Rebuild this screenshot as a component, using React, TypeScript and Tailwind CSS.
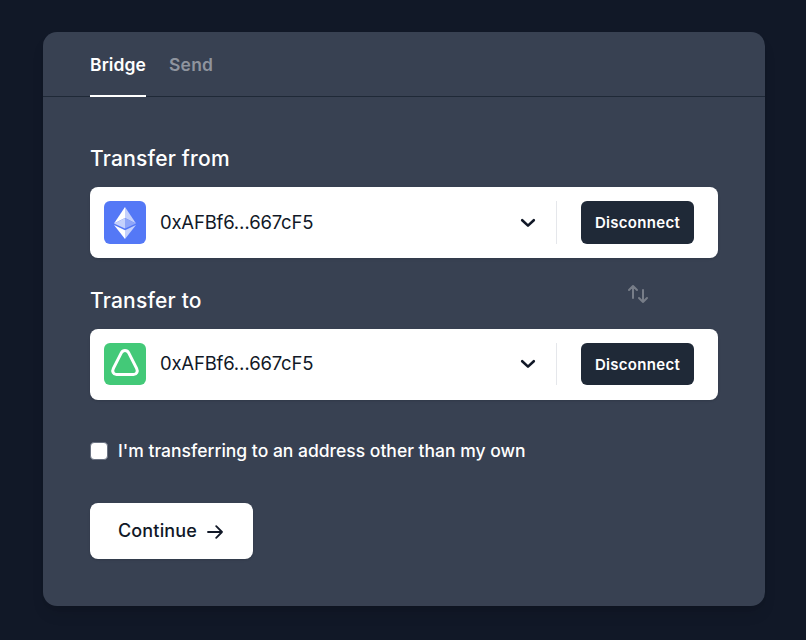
import type { ReactNode } from "react";

function EthereumLogo() {
  return (
    <div className="flex h-[43px] w-[42px] shrink-0 items-center justify-center rounded-md bg-[#5478f6]">
      <svg width="22" height="32" viewBox="0 0 22 32">
        <path d="M11 0 0 16.4 11 11Z" fill="#fff" />
        <path d="M11 0 22 16.4 11 11Z" fill="#c5d1fc" />
        <path d="M11 11 0 16.4 11 21.6Z" fill="#c5d1fc" />
        <path d="M11 11 22 16.4 11 21.6Z" fill="#8fa6f9" />
        <path d="M0 18 11 23.2V32Z" fill="#fff" />
        <path d="M22 18 11 23.2V32Z" fill="#c5d1fc" />
      </svg>
    </div>
  );
}

function TriangleLogo() {
  return (
    <div className="h-[42px] w-[42px] shrink-0 rounded-md bg-[#43c978]">
      <svg width="42" height="42" viewBox="0 0 42 42" fill="none">
        <path
          d="M17.3 9.9C18.900 6.700 23.100 6.700 24.700 9.900L32.600 25.400C34.200 28.500 32.600 31.500 29.600 31.500H12.400C9.400 31.500 7.800 28.500 9.400 25.400Z"
          stroke="#fff"
          strokeWidth="3"
          strokeLinejoin="round"
        />
      </svg>
    </div>
  );
}

function WalletRow({ logo, compact = false }: { logo: ReactNode; compact?: boolean }) {
  const controlHeight = compact ? "h-[42px]" : "h-[43px]";
  return (
    <div className="flex h-[71px] items-start rounded-lg bg-white pl-3.5 pr-6 pt-3.5 shadow-sm">
      {logo}
      <span className={`ml-3.5 flex-1 whitespace-nowrap text-[18.5px] tracking-[-0.2px] text-[#111827] ${compact ? "leading-[41px]" : "leading-[43px]"}`}>
        0xAFBf6…667cF5
      </span>
      <div className={`mr-5 flex items-center ${controlHeight}`}>
        <svg width="16" height="10" viewBox="0 0 16 10" fill="none">
          <path d="m2.2 2.200 5.800 5.400L13.800 2.200" stroke="#111827" strokeWidth="2.6" strokeLinecap="round" strokeLinejoin="round" />
        </svg>
      </div>
      <div className={`mr-6 w-px bg-gray-200 ${controlHeight}`} />
      <button className={`w-[113px] rounded-md bg-[#1f2937] pt-0.5 text-[15px] font-semibold tracking-[0.3px] text-white ${controlHeight}`}>
        Disconnect
      </button>
    </div>
  );
}

export default function App() {
  return (
    <main className="h-[640px] w-full bg-[#111827] pl-[43px] pt-8 font-['Inter','Liberation_Sans',sans-serif]">
      <section className="h-[574px] w-[722px] rounded-[14px] bg-[#384152] text-white shadow-lg">
        <nav className="flex h-[65px] gap-[23px] border-b border-[#1f2937] pl-[47px] text-[17.5px] font-semibold">
          <a className="-mb-px h-[65px] w-14 whitespace-nowrap border-b-2 border-white pt-[19px] leading-7 tracking-[0.1px]">Bridge</a>
          <a className="whitespace-nowrap pt-[19px] leading-7 tracking-[0.2px] text-[#8f949e]">Send</a>
        </nav>
        <div className="pl-[47px] pr-[47px] pt-[46px]">
          <h2 className="mb-3 h-8 text-[21px] font-medium leading-8 tracking-[0.22px]">Transfer from</h2>
          <WalletRow logo={<EthereumLogo />} />
          <div className="flex h-[71px] justify-between pr-[69px] pt-[26px]">
            <h2 className="text-[21px] font-medium leading-[34px] tracking-[0.2px]">Transfer to</h2>
            <svg width="22" height="20" viewBox="0 0 22 20" fill="none" stroke="#777d88" strokeWidth="2" strokeLinecap="round" strokeLinejoin="round">
              <path d="M6 14V2M2 6 6 2l4 4M16 6v12M12 14l4 4 4-4" />
            </svg>
          </div>
          <WalletRow logo={<TriangleLogo />} compact />
          <label className="mt-9 flex h-[30px] items-center whitespace-nowrap text-[17.5px] font-medium">
            <input type="checkbox" className="mr-[10px] h-[18px] w-[18px] appearance-none rounded border border-gray-500 bg-white" />
            I'm transferring to an address other than my own
          </label>
          <button className="mt-[37px] flex h-14 w-[163px] items-center rounded-lg bg-white pl-7 text-[18px] font-medium text-[#111827] shadow-sm">
            <span className="mr-[10px] pb-0.5 tracking-[0.15px]">Continue</span>
            <svg width="16" height="14" viewBox="0 0 16 14" fill="none" stroke="currentColor" strokeWidth="1.8" strokeLinecap="round" strokeLinejoin="round" className="mt-0.5">
              <path d="M1 7h14M9.200 1.200 15 7l-5.800 5.800" />
            </svg>
          </button>
        </div>
      </section>
    </main>
  );
}
